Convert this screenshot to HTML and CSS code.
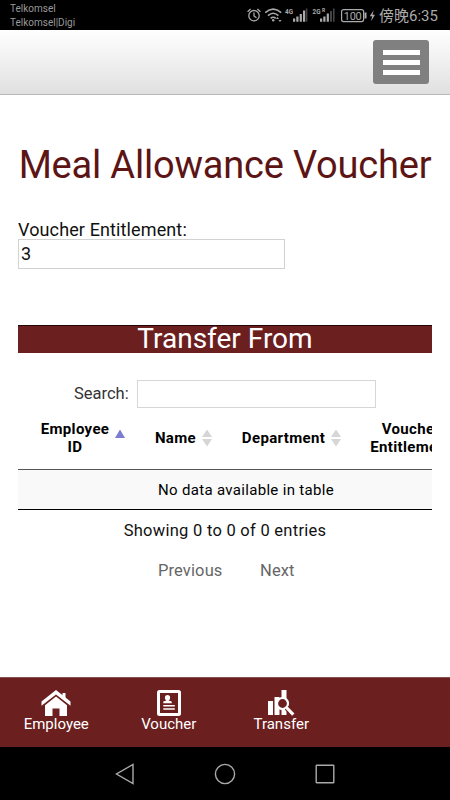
FILE: index.html
```html
<!DOCTYPE html>
<html lang="en">
<head>
<meta charset="utf-8">
<title>Meal Allowance Voucher</title>
<link rel="stylesheet" href="styles.css">
</head>
<body>
<div class="status">
  <div class="carriers"><div>Telkomsel</div><div>Telkomsel|Digi</div></div>
  <svg class="status-icons" width="132" height="30" viewBox="245 0 132 30">
    <g fill="none" stroke="#aaa" stroke-width="1.3">
      <circle cx="254" cy="15.7" r="5.2"/>
      <path d="M254 12.5v3.5l2.5 1.7M247.6 11.8l3-2.8M260.4 11.8l-3-2.8"/>
      <path d="M265.2 12.6q8-7 16 0M268 15.6q5.200-4.600 10.400 0M270.600 18.400q2.600-2.300 5.200 0" stroke-width="1.500"/>
      <rect x="341.600" y="9.600" width="22" height="12" rx="2" stroke-width="1.200"/>
    </g>
    <g fill="#aaa">
      <circle cx="273.200" cy="20.300" r="1.200"/>
      <path d="M276 19l1.500-2 1.500 2zM278.500 20h3l-1.500 2z"/>
      <path d="M293 18.500h2.200v3.200H293zM296.300 16.500h2.200v5.200h-2.200zM299.700 14h2.200v7.700h-2.200zM303 10.500h2.200v11.200H303z"/>
      <path d="M320 18.500h2.200v3.200H320zM323.300 16.500h2.200v5.200h-2.200zM326.700 13.500h2.200v8.200h-2.200z"/>
      <path d="M364.500 12.500h2v6h-2zM373.700 10.300l-4 6h2.500l-1.200 5 4-6.500h-2.500z"/>
    </g>
    <path d="M305.800 8.500h1.600v13.200h-1.600zM330 11h2v10.700h-2zM333 8.500h1.600v13.200H333z" fill="#444"/>
    <g fill="#aaa" font-family="Roboto, sans-serif" font-weight="700">
      <text x="285" y="14" font-size="8" textLength="8" lengthAdjust="spacingAndGlyphs">4G</text>
      <text x="312.500" y="14" font-size="8" textLength="8" lengthAdjust="spacingAndGlyphs">2G</text>
      <text x="322" y="12.300" font-size="5">R</text>
      <text x="343.800" y="19.700" font-size="11" font-weight="400" textLength="18">100</text>
    </g>
  </svg>
  <div class="clock">傍晚6:35</div>
</div>
<header class="topbar">
  <div class="menu"><span></span><span></span><span></span></div>
</header>
<main>
  <h1>Meal Allowance Voucher</h1>
  <div class="label">Voucher Entitlement:</div>
  <div class="field">3</div>
  <h2>Transfer From</h2>
  <div class="search"><span>Search:</span><div class="search-box"></div></div>
  <div class="table-wrap">
    <table>
      <colgroup><col class="c1"><col class="c2"><col class="c3"><col class="c4"></colgroup>
      <thead><tr>
        <th>Employee<br>ID<svg class="sort" width="10" height="18" viewBox="0 0 10 18"><path d="M0 9L5 .500l5 8.500z" fill="#7b7dd2"/></svg></th>
        <th>Name<svg class="sort" width="10" height="18" viewBox="0 0 10 18"><path d="M0 8L5 .500 10 8zM0 10h10l-5 7.500z" fill="#d6d6d6"/></svg></th>
        <th>Department<svg class="sort" width="10" height="18" viewBox="0 0 10 18"><path d="M0 8L5 .500 10 8zM0 10h10l-5 7.500z" fill="#d6d6d6"/></svg></th>
        <th>Voucher<br>Entitlement</th>
      </tr></thead>
      <tbody><tr><td colspan="4">No data available in table</td></tr></tbody>
    </table>
  </div>
  <div class="info">Showing 0 to 0 of 0 entries</div>
  <div class="pager"><span class="prev">Previous</span><span class="next">Next</span></div>
</main>
<nav class="tabs">
  <div class="tab">
    <svg width="30" height="26" viewBox="0 0 30 26" fill="#fff"><path d="M15 0L29.500 11.500v4.200L15 4.500.500 15.700v-4.200z"/><path d="M21.500 3h3v5h-3z"/><path d="M15 6.500l11 8.700V26h-7.500v-7.500h-7V26H4V15.200z"/></svg>
    <span class="t-employee">Employee</span>
  </div>
  <div class="tab">
    <svg width="24" height="26" viewBox="0 0 24 26"><rect x="1.500" y="1.500" width="21" height="23" rx="1" fill="none" stroke="#fff" stroke-width="3"/><g fill="#fff"><circle cx="10.500" cy="7.700" r="2.600"/><path d="M9.300 9h2.400v1.500l3 1v1.700H6.300v-1.700l3-1zM6.300 15h11.500v1.500H6.300zM6.300 18.200h11.500v1.500H6.300z"/></g></svg>
    <span class="t-voucher">Voucher</span>
  </div>
  <div class="tab">
    <svg width="28" height="26" viewBox="0 0 28 26"><path d="M1 11h5v14H1zM7.500 7h5v18h-5zM14.500 0h5v25h-5z" fill="#fff"/><circle cx="15.500" cy="13.500" r="5.500" fill="#6b1f1f" stroke="#fff" stroke-width="2.200"/><path d="M19.700 17.700l6.500 7" stroke="#6b1f1f" stroke-width="5"/><path d="M19.500 17.500l6.800 7.200" stroke="#fff" stroke-width="3.200"/></svg>
    <span class="t-transfer">Transfer</span>
  </div>
</nav>
<div class="sysnav">
  <svg width="20" height="22" viewBox="0 0 20 22"><path d="M18 1.500v19L1.500 11z"/></svg>
  <svg width="22" height="22" viewBox="0 0 22 22"><circle cx="11" cy="11" r="9.600"/></svg>
  <svg width="20" height="22" viewBox="0 0 20 22"><rect x="1.200" y="2.300" width="17.600" height="17.400" rx=".5"/></svg>
</div>
</body>
</html>
```

FILE: styles.css
```css
* { box-sizing: border-box; }
body {
  margin: 0;
  width: 450px;
  height: 800px;
  display: flex;
  flex-direction: column;
  overflow: hidden;
  background: #fff;
  color: #111;
  font-family: Roboto, "Noto Sans CJK TC", sans-serif;
}
.status {
  height: 30px;
  flex: none;
  background: #000;
  color: #999;
  display: flex;
}
.carriers {
  width: 245px;
  padding: 2px 0 0 10px;
  font-size: 10px;
  line-height: 14px;
}
.clock {
  padding-left: 2px;
  font-size: 15px;
  line-height: 32px;
  color: #aaa;
  white-space: nowrap;
}
.topbar {
  height: 65px;
  flex: none;
  display: flex;
  justify-content: flex-end;
  padding: 10px 21px 0 0;
  background: linear-gradient(#fff, #e0e0e0);
  border-bottom: 1px solid #b8b8b8;
}
.menu {
  width: 56px;
  height: 44px;
  border-radius: 3px;
  background: #808080;
  padding: 10px 9.500px 0;
  display: flex;
  flex-direction: column;
  gap: 5px;
}
.menu span { height: 5px; flex: none; background: #fff; }
main {
  height: 582px;
  flex: none;
  padding: 47px 18px 0;
}
h1 {
  margin: 0;
  font-size: 38px;
  line-height: 46px;
  font-weight: 400;
  letter-spacing: -.2px;
  color: #5c1414;
  text-align: center;
  white-space: nowrap;
}
.label {
  margin-top: 32px;
  font-size: 18px;
  line-height: 20px;
  letter-spacing: .12px;
}
.field {
  width: 267px;
  height: 30px;
  margin-top: -1px;
  border: 1px solid #d2d2d2;
  padding-left: 2px;
  font-size: 18px;
  line-height: 28px;
}
h2 {
  margin: 56px 0 0;
  height: 28px;
  border-top: 1px solid #260606;
  background: #6b1f1f;
  color: #fff;
  font-size: 28px;
  line-height: 25px;
  font-weight: 400;
  text-align: center;
}
.search {
  margin: 27px 0 0 56px;
  display: flex;
  gap: 8px;
  font-size: 16.500px;
  line-height: 27px;
  color: #333;
}
.search span { width: 55px; white-space: nowrap; }
.search-box {
  width: 239px;
  height: 28px;
  border: 1px solid #d6d6d6;
}
.table-wrap {
  margin-top: 2px;
  height: 100px;
  overflow: hidden;
}
table {
  width: 456px;
  table-layout: fixed;
  border-collapse: separate;
  border-spacing: 0;
  font-size: 15px;
  color: #000;
}
.c1 { width: 114px; }
.c2 { width: 87px; }
.c3 { width: 129px; }
.c4 { width: 126px; }
th {
  position: relative;
  height: 60px;
  padding: 0 0 4px;
  font-weight: 700;
  line-height: 18px;
  letter-spacing: .35px;
  border-bottom: 1px solid #555;
}
.sort {
  position: absolute;
  right: 7px;
  top: 19px;
}
td {
  height: 40px;
  padding: 0;
  text-align: center;
  letter-spacing: .32px;
  background: #f9f9f9;
  border-bottom: 1px solid #000;
}
.info {
  margin-top: 9px;
  font-size: 16.500px;
  line-height: 24px;
  letter-spacing: .27px;
  text-align: center;
}
.pager {
  margin-top: 17px;
  padding-left: 140px;
  display: flex;
  font-size: 16.500px;
  line-height: 22px;
  letter-spacing: .12px;
  color: #666;
}
.prev { width: 102px; }
.tabs {
  height: 70px;
  flex: none;
  display: flex;
  background: #6b1f1f;
  border-top: 1px solid #8a5050;
  color: #fff;
}
.tab {
  width: 112.500px;
  padding-top: 12px;
  display: flex;
  flex-direction: column;
  align-items: center;
  font-size: 15px;
  line-height: 16px;
}
.sysnav {
  height: 53px;
  flex: none;
  display: flex;
  align-items: center;
  justify-content: center;
  gap: 79px;
  background: #000;
}
.sysnav svg { fill: none; stroke: #aaa; stroke-width: 1.400; }
```
